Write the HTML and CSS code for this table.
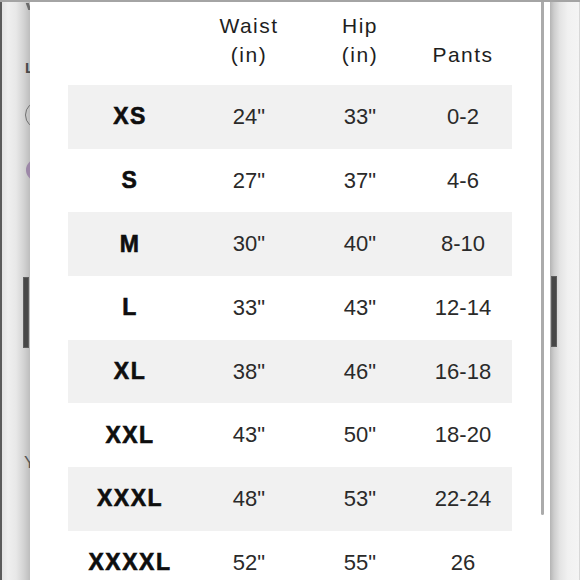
FILE: index.html
```html
<!DOCTYPE html>
<html>
<head>
<meta charset="utf-8">
<link rel="stylesheet" href="styles.css">
</head>
<body>
<div class="screen">
  <div class="strip strip-left">
    <div class="mark"></div>
    <div class="letter letter-l">L</div>
    <div class="ring"></div>
    <div class="dot"></div>
    <div class="bar bar-left"></div>
    <div class="letter letter-y">Y</div>
  </div>
  <div class="modal">
    <div class="chart">
      <div class="head">
        <div class="hcell"></div>
        <div class="hcell">Waist<br>(in)</div>
        <div class="hcell">Hip<br>(in)</div>
        <div class="hcell">Pants</div>
      </div>
      <div class="row shade"><div class="size">XS</div><div class="val">24"</div><div class="val">33"</div><div class="val">0-2</div></div>
      <div class="row"><div class="size">S</div><div class="val">27"</div><div class="val">37"</div><div class="val">4-6</div></div>
      <div class="row shade"><div class="size">M</div><div class="val">30"</div><div class="val">40"</div><div class="val">8-10</div></div>
      <div class="row"><div class="size">L</div><div class="val">33"</div><div class="val">43"</div><div class="val">12-14</div></div>
      <div class="row shade"><div class="size">XL</div><div class="val">38"</div><div class="val">46"</div><div class="val">16-18</div></div>
      <div class="row"><div class="size">XXL</div><div class="val">43"</div><div class="val">50"</div><div class="val">18-20</div></div>
      <div class="row shade"><div class="size">XXXL</div><div class="val">48"</div><div class="val">53"</div><div class="val">22-24</div></div>
      <div class="row"><div class="size">XXXXL</div><div class="val">52"</div><div class="val">55"</div><div class="val">26</div></div>
    </div>
    <div class="scrollbar"></div>
  </div>
  <div class="strip strip-right">
    <div class="bar bar-right"></div>
  </div>
</div>
</body>
</html>
```

FILE: styles.css
```css
* { box-sizing: border-box; }
html, body { margin: 0; padding: 0; }
body {
  width: 580px;
  height: 580px;
  overflow: hidden;
  font-family: "Liberation Sans", Arial, sans-serif;
  background: #ffffff;
}
.screen {
  display: flex;
  width: 580px;
  height: 580px;
  border-top: 2px solid #a4a4a4;
  overflow: hidden;
}
.strip {
  width: 30px;
  flex: none;
  overflow: hidden;
  display: flex;
  flex-direction: column;
}
.strip-left {
  border-left: 2px solid #5c5c5c;
  padding-left: 21px;
  background: linear-gradient(to right, #e4e4e4 0px, #efefef 6px, #e8e8e8 14px, #d2d2d2 22px, #bdbdbd 28px);
}
.strip-right {
  width: 30px;
  padding-left: 1px;
  background: linear-gradient(to right, #b4b4b4 0px, #cdcdcd 4px, #e4e4e4 10px, #f1f1f1 18px, #f5f5f5 30px);
  border-right: 1px solid #d8d8d8;
}
.mark {
  width: 3px;
  height: 7px;
  margin: 1px 0 0 4px;
  background: #6a6a6a;
  transform: skewX(20deg);
  flex: none;
}
.letter {
  color: #4a4a4a;
  font-weight: bold;
  flex: none;
  line-height: 1;
}
.letter-l { font-size: 15px; margin-top: 50px; margin-left: 2px; }
.ring {
  flex: none;
  width: 28px;
  height: 28px;
  border: 1.5px solid #707070;
  border-radius: 50%;
  margin-top: 26px;
  margin-left: 2px;
}
.dot {
  flex: none;
  width: 22px;
  height: 22px;
  border-radius: 50%;
  background: #9d88a8;
  margin-top: 30px;
  margin-left: 3px;
}
.bar {
  flex: none;
  width: 6px;
  height: 71px;
  background: #474747;
  border: 1px solid #5e5e5e;
}
.bar-left { margin-top: 96px; }
.bar-right { margin-top: 274px; }
.letter-y {
  font-size: 17px;
  font-weight: normal;
  color: #555;
  margin-top: 106px;
  margin-left: 1px;
}
.modal {
  width: 520px;
  flex: none;
  background: #ffffff;
  display: flex;
  padding-left: 38px;
  position: relative;
}
.chart {
  width: 444px;
  flex: none;
}
.scrollbar {
  position: absolute;
  right: 6px;
  top: -2px;
  width: 3px;
  height: 515px;
  background: #ababab;
  border-radius: 0 0 2px 2px;
}
.head {
  display: grid;
  grid-template-columns: 124px 114px 108px 98px;
  height: 83px;
  align-items: end;
  padding-bottom: 16px;
}
.hcell {
  text-align: center;
  font-size: 21px;
  line-height: 29px;
  letter-spacing: 1.5px;
  color: #1e1e1e;
}
.row {
  display: grid;
  grid-template-columns: 124px 114px 108px 98px;
  height: 63.7px;
  align-items: center;
}
.row.shade { background: #f1f1f1; }
.size {
  text-align: center;
  font-weight: bold;
  font-size: 23px;
  letter-spacing: 1.5px;
  color: #0e0e0e;
  -webkit-text-stroke: 0.6px #0e0e0e;
}
.val {
  text-align: center;
  font-size: 22px;
  color: #2a2a2a;
}
```
